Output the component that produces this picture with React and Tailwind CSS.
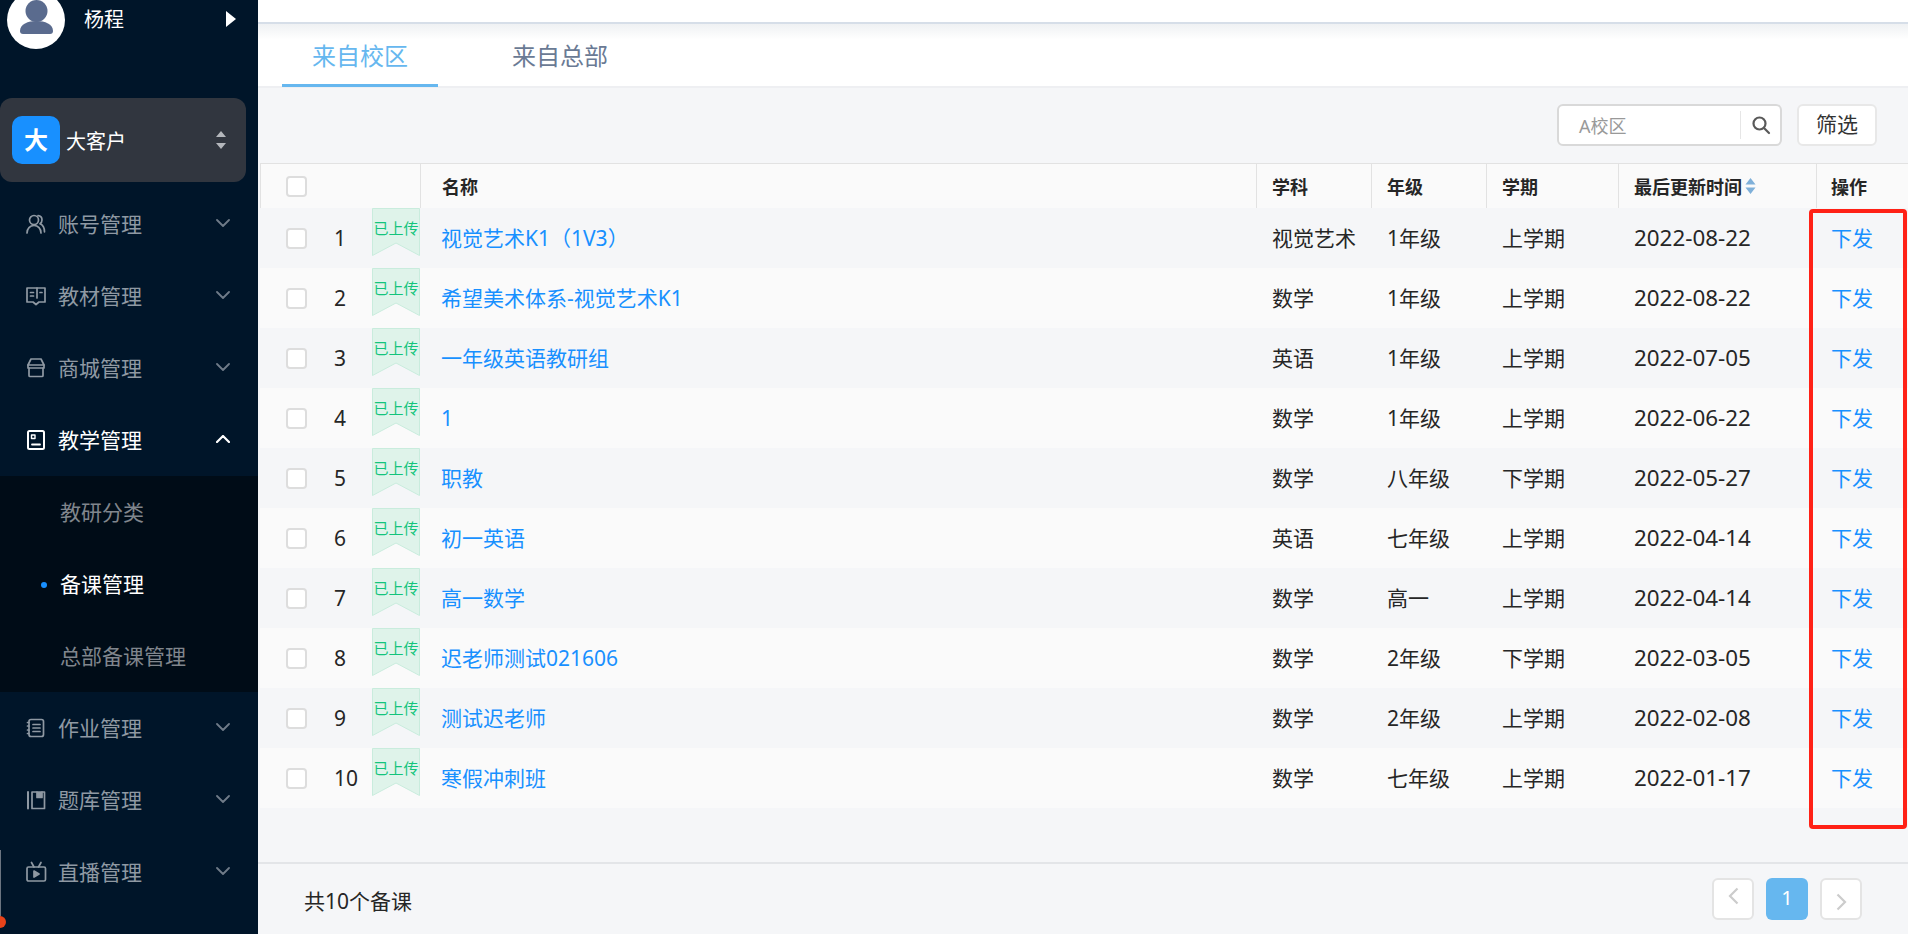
import React from "react";

const font = { fontFamily: '"Noto Sans", "Noto Sans CJK SC", sans-serif' };

const rows = [
  ["视觉艺术K1（1V3）", "视觉艺术", "1年级", "上学期", "2022-08-22"],
  ["希望美术体系-视觉艺术K1", "数学", "1年级", "上学期", "2022-08-22"],
  ["一年级英语教研组", "英语", "1年级", "上学期", "2022-07-05"],
  ["1", "数学", "1年级", "上学期", "2022-06-22"],
  ["职教", "数学", "八年级", "下学期", "2022-05-27"],
  ["初一英语", "英语", "七年级", "上学期", "2022-04-14"],
  ["高一数学", "数学", "高一", "上学期", "2022-04-14"],
  ["迟老师测试021606", "数学", "2年级", "下学期", "2022-03-05"],
  ["测试迟老师", "数学", "2年级", "上学期", "2022-02-08"],
  ["寒假冲刺班", "数学", "七年级", "上学期", "2022-01-17"],
];

const Ico = ({ children }) => (
  <svg width="22" height="22" viewBox="0 0 22 22" fill="none" stroke="currentColor" strokeWidth="1.7" strokeLinejoin="round" strokeLinecap="round" className="shrink-0">
    {children}
  </svg>
);

const icons = {
  user: (
    <Ico>
      <circle cx="9" cy="7" r="4.500" />
      <path d="M2 20c0-4.500 3-7.500 7-7.500s7 3 7 7.500" />
      <path d="M13 2.600c2.500.2 4 2 4 4.400 0 1.600-.8 3-2 3.800 2.800 1.200 4.500 4.500 4.500 8" />
    </Ico>
  ),
  book: (
    <Ico>
      <path d="M2 3h18v14h-6l-3 2.500L8 17H2z" />
      <path d="M12 3v10M5.500 7.500h3M5.500 11h3M15 7.500h2" />
    </Ico>
  ),
  shop: (
    <Ico>
      <path d="M6 2h10l3 6H3z" />
      <path d="M3 8v3h16V8" />
      <path d="M4 11v7.500c0 .6.400 1 1 1h12c.6 0 1-.4 1-1V11" />
    </Ico>
  ),
  teach: (
    <Ico>
      <rect x="3" y="2" width="16" height="18" rx="1.500" strokeWidth="2" />
      <rect x="6.500" y="6" width="3.500" height="3.500" strokeWidth="1.400" />
      <path d="M7 15.500h8" strokeWidth="1.800" />
    </Ico>
  ),
  work: (
    <Ico>
      <rect x="4" y="2.500" width="14.500" height="17" rx="2" />
      <path d="M8 7.500h7M8 11h7M8 14.500h7M2.500 5.500h1.500M2.500 9h1.500M2.500 13h1.500M2.500 16.500h1.500" />
    </Ico>
  ),
  bank: (
    <Ico>
      <path d="M3 3v16.500" strokeWidth="2" />
      <path d="M7 3h12.500v16.500H7z" />
      <path d="M12 3v5.500h5V3" fill="currentColor" />
    </Ico>
  ),
  live: (
    <Ico>
      <rect x="2" y="6" width="18.500" height="14" rx="1.500" />
      <path d="M6.500 1.500 9 6M16 1.500 13.500 6" />
      <path d="M9 10l5 3-5 3z" fill="currentColor" />
    </Ico>
  ),
};

const Chevron = ({ up, active }) => (
  <svg width="14" height="8" viewBox="0 0 14 8" fill="none" stroke={active ? "#ffffff" : "#6f7b88"} strokeWidth={active ? 2.200 : 1.800} strokeLinecap="round" strokeLinejoin="round" className={`ml-auto mr-[28px] mb-[3px] ${up ? "rotate-180" : ""}`}>
    <path d="M1 1l6 6 6-6" />
  </svg>
);

const MenuItem = ({ icon, label, up, active }) => (
  <div className={`flex h-[72px] items-center pl-[25px] text-[21px] leading-none ${active ? "text-white" : "text-[#8f99a3]"}`}>
    {icons[icon]}
    <span className="ml-[11px]">{label}</span>
    <Chevron up={up} active={active} />
  </div>
);

const SubItem = ({ label, active }) => (
  <div className={`relative flex h-[72px] items-center pl-[60px] text-[21px] leading-none ${active ? "text-white" : "text-[#80868d]"}`}>
    {active && <span className="absolute left-[41px] top-[34px] h-[6px] w-[6px] rounded-full bg-[#1890ff]" />}
    <span>{label}</span>
  </div>
);

const Check = () => (
  <span className="block h-[21px] w-[21px] rounded-[4px] border-2 border-[#dddddd] bg-white" />
);

const Badge = () => (
  <div className="relative h-[48px] w-[48px]">
    <svg width="48" height="48" viewBox="0 0 48 48" className="absolute inset-0">
      <path d="M.5.500h47v47L24 35 .5 47.500z" fill="#dff3ea" stroke="#c9ecdd" />
    </svg>
    <span className="absolute left-0 top-[10px] w-full whitespace-nowrap text-center text-[15px] leading-[20px] text-[#14c47c]">已上传</span>
  </div>
);

const Th = ({ w, children, border = true, grow, pl = "pl-[15px]" }) => (
  <div className={`flex h-full items-center ${pl} pt-[2px] text-[18px] font-bold text-[#262626] ${grow ? "flex-1" : ""} ${border ? "border-l border-[#e2e2e2]" : ""}`} style={w ? { width: w } : undefined}>
    {children}
  </div>
);

const Row = ({ r, i }) => (
  <div className={`flex h-[60px] items-center text-[21px] leading-[30px] text-[#262626] ${i % 2 ? "bg-[#fafafa]" : "bg-[#f5f6f8]"}`}>
    <div className="flex h-full w-[160px] shrink-0 pl-[26px]">
      <div className="flex h-full w-[48px] items-center"><Check /></div>
      <div className="flex h-full w-[38px] items-center">{i + 1}</div>
      <div className="h-full"><Badge /></div>
    </div>
    <div className="flex-1 pl-[21px] text-[#1890ff]">{r[0]}</div>
    <div className="w-[115px] whitespace-nowrap pl-[16px]">{r[1]}</div>
    <div className="w-[115px] pl-[16px]">{r[2]}</div>
    <div className="w-[132px] pl-[16px]">{r[3]}</div>
    <div className="w-[198px] pl-[16px] text-[22.400px]">{r[4]}</div>
    <div className="w-[92px] pl-[15px] text-[#1890ff]">下发</div>
  </div>
);

export default function App() {
  return (
    <div className="relative flex h-[934px] w-[1908px] overflow-hidden bg-[#f5f6f8]" style={font}>
      <aside className="flex w-[258px] shrink-0 flex-col bg-[#001529]">
        <div className="-mt-[9px] flex h-[107px] shrink-0 items-start pl-[7px]">
          <div className="flex h-[58px] w-[58px] items-center justify-center overflow-hidden rounded-full bg-white">
            <svg width="58" height="58" viewBox="0 0 58 58">
              <circle cx="29.500" cy="20" r="11" fill="#5a6b8e" />
              <path d="M13 40c0-7 8-10 16.500-10S46 33 46 40c0 2-1 3-3 3H16c-2 0-3-1-3-3z" fill="#5a6b8e" />
            </svg>
          </div>
          <span className="ml-[19px] mt-[16px] text-[20px] leading-[26px] text-white">杨程</span>
          <svg width="10" height="16" viewBox="0 0 10 16" className="ml-[102px] mt-[20px]"><path d="M0 0l10 8-10 8z" fill="#fff" /></svg>
        </div>
        <div className="flex h-[84px] w-[246px] shrink-0 items-center rounded-[12px] bg-[#31363f] pl-[12px]">
          <div className="flex h-[48px] w-[48px] items-center justify-center rounded-[10px] bg-[#1890ff] text-[24px] font-bold text-white">大</div>
          <span className="ml-[6px] pt-[3px] text-[20px] text-white">大客户</span>
          <svg width="12" height="20" viewBox="0 0 12 20" className="ml-auto mr-[19px]">
            <path d="M6 1l5 6H1zM6 19l5-6H1z" fill="#b4b7bc" />
          </svg>
        </div>
        <div className="mt-[6px]">
          <MenuItem icon="user" label="账号管理" />
          <MenuItem icon="book" label="教材管理" />
          <MenuItem icon="shop" label="商城管理" />
          <MenuItem icon="teach" label="教学管理" up active />
          <div className="bg-[#000c17]">
            <SubItem label="教研分类" />
            <SubItem label="备课管理" active />
            <SubItem label="总部备课管理" />
          </div>
          <MenuItem icon="work" label="作业管理" />
          <MenuItem icon="bank" label="题库管理" />
          <MenuItem icon="live" label="直播管理" />
        </div>
      </aside>

      <main className="flex min-w-0 flex-1 flex-col">
        <div className="h-[24px] shrink-0 border-b-2 border-[#d6dee8] bg-white" />
        <div className="flex h-[64px] shrink-0 border-b-2 border-[#eeeff2] bg-gradient-to-b from-[#eff1f3] via-white via-[25%] to-white pl-[24px] text-[24px]">
          <div className="-mb-[1px] flex h-[63px] w-[156px] items-center justify-center border-b-[3px] border-[#66b7ef] pt-[3px] text-[#66b7ef]">来自校区</div>
          <div className="ml-[74px] flex h-[63px] items-center text-[#6a7a94]">来自总部</div>
        </div>
        <div className="flex h-[75px] shrink-0 items-start justify-end pt-[16px]">
          <div className="flex h-[42px] w-[225px] items-center rounded-[6px] border-2 border-[#d9d9d9] bg-white pl-[20px] text-[18px] text-[#999999]">
            <span className="w-[161px] pt-[2px]">A校区</span>
            <span className="h-[28px] border-l border-[#e6e6e6]" />
            <svg width="20" height="20" viewBox="0 0 20 20" fill="none" stroke="#595959" strokeWidth="2.200" strokeLinecap="round" className="ml-[10px]">
              <circle cx="8.500" cy="8.500" r="6" /><path d="M13 13l5 5" />
            </svg>
          </div>
          <div className="ml-[15px] mr-[31px] flex h-[42px] w-[80px] items-center justify-center rounded-[6px] border-2 border-[#e8e8e8] bg-white text-[21px] text-[#333333]">筛选</div>
        </div>
        <div className="ml-[2px] flex h-[45px] shrink-0 items-center border-t border-l border-[#e2e2e2] bg-[#fafafa]">
          <div className="flex h-full w-[159px] shrink-0 items-center pl-[25px]"><Check /></div>
          <Th grow><span className="pl-[6px]">名称</span></Th>
          <Th w={115}>学科</Th>
          <Th w={115}>年级</Th>
          <Th w={132}>学期</Th>
          <Th w={198}>
            最后更新时间
            <svg width="11" height="18" viewBox="0 0 11 18" className="ml-[3px] mb-[3px]">
              <path d="M5.500 1l5 6.500H.5zM5.500 17l5-6.500H.5z" fill="#7fb0d9" />
            </svg>
          </Th>
          <Th w={92} pl="pl-[14px]">操作</Th>
        </div>
        <div className="ml-[2px] shrink-0">
          {rows.map((r, i) => <Row key={i} r={r} i={i} />)}
        </div>
        <div className="mt-[54px] flex flex-1 items-center border-t-2 border-[#e3e5e8] pl-[46px] pr-[46px] text-[21px] text-[#262626]">
          <span className="pt-[5px]">共10个备课</span>
          <div className="ml-auto flex gap-[12px]">
            <div className="flex h-[42px] w-[42px] items-center justify-center rounded-[6px] border-2 border-[#e4e4e4] bg-white pb-[6px]">
              <svg width="11" height="18" viewBox="0 0 11 18" fill="none" stroke="#cccccc" strokeWidth="2.200"><path d="M9.500 1.500 2 9l7.500 7.500" /></svg>
            </div>
            <div className="flex h-[42px] w-[42px] items-center justify-center rounded-[6px] bg-[#66b7ef] pb-[2px] text-[20px] text-white">1</div>
            <div className="flex h-[42px] w-[42px] items-center justify-center rounded-[6px] border-2 border-[#e4e4e4] bg-white pt-[6px]">
              <svg width="11" height="18" viewBox="0 0 11 18" fill="none" stroke="#cccccc" strokeWidth="2.200"><path d="M1.500 1.500 9 9l-7.500 7.500" /></svg>
            </div>
          </div>
        </div>
      </main>

      <div className="absolute left-[1809px] top-[209px] h-[620px] w-[98px] rounded-[4px] border-[4px] border-[#ff2116]" />
      <div className="absolute left-0 top-[850px] h-[66px] w-[1px] bg-[#6b7480]" />
      <div className="absolute -left-[6px] top-[916px] h-[12px] w-[12px] rounded-full bg-[#e8431a]" />
    </div>
  );
}
